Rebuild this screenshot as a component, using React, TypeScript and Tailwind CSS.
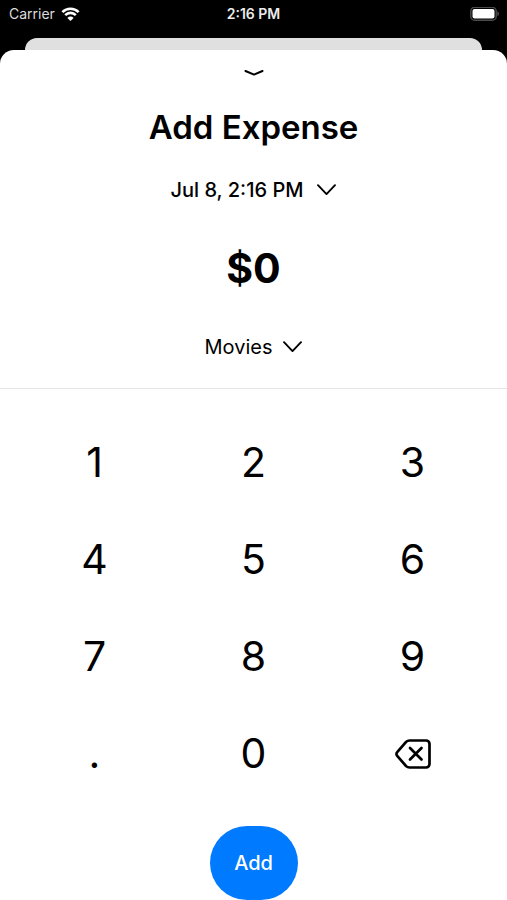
import { useState } from "react";

const KEYS = ["1", "2", "3", "4", "5", "6", "7", "8", "9", ".", "0"];

function StatusBar() {
  return (
    <header className="grid h-[38px] grid-cols-3 items-start px-2 pt-1 text-white">
      <div className="flex h-5 items-center gap-[6px] pl-px text-sm text-[#dcdcdc]">
        <span>Carrier</span>
        <svg width="19" height="14" viewBox="0 0 18 14" fill="none" stroke="#ffffff" strokeWidth="2.6" aria-label="Wi-Fi">
          <path d="M0.9 5.1a11.5 11.5 0 0 1 16.2 0" />
          <path d="M3.7 8.1a7.5 7.5 0 0 1 10.6 0" />
          <path d="M9 14 5.9 10.9a4.4 4.4 0 0 1 6.2 0Z" fill="#ffffff" stroke="none" />
        </svg>
      </div>
      <div className="flex h-5 items-center justify-center text-sm font-semibold text-[#ececec]">2:16 PM</div>
      <div className="flex h-5 items-center justify-end">
        <svg width="29" height="14" viewBox="0 0 29 14" aria-label="Battery full">
          <rect x="0.8" y="0.3" width="25.4" height="12.9" rx="3.8" fill="none" stroke="#4c4c4c" strokeWidth="1.4" />
          <rect x="2.500" y="2" width="22" height="9.500" rx="2" fill="#ffffff" />
          <path d="M27.300 4.3c1.100.4 1.700 1.300 1.700 2.400s-.6 2-1.700 2.400Z" fill="#4c4c4c" />
        </svg>
      </div>
    </header>
  );
}

function Chevron() {
  return (
    <svg className="pointer-events-none" width="19" height="12" viewBox="0 0 19 12" fill="none" stroke="#000000" strokeWidth="1.9" strokeLinecap="round" strokeLinejoin="round" aria-hidden="true">
      <path d="m1 1.2 8.500 8.900L18 1.2" />
    </svg>
  );
}

export default function App() {
  const [digits, setDigits] = useState("");
  const [category, setCategory] = useState("Movies");

  const press = (key: string) => {
    if (key === "." && digits.includes(".")) return;
    setDigits(digits === "" && key === "0" ? "" : digits + key);
  };

  return (
    <div className="min-h-screen bg-black font-['Inter',sans-serif] text-black">
      <StatusBar />
      <div className="mx-[25px] h-3 rounded-t-xl bg-[#e0e0e0]" />
      <main className="flex flex-col rounded-t-[14px] bg-white">
        <button aria-label="Close" className="flex h-[46px] items-center justify-center">
          <svg width="20" height="6" viewBox="0 0 20 6" fill="none" stroke="#000000" strokeWidth="2" strokeLinecap="round" strokeLinejoin="round" aria-hidden="true">
            <path d="m1.5 1 8.500 3.600L18.500 1" />
          </svg>
        </button>
        <h1 className="pt-[10px] text-center text-[33px] leading-[42px] font-semibold">Add Expense</h1>
        <div className="flex justify-center pt-7">
          <button className="flex h-7 items-center gap-[14px] text-[20px] font-medium">
            Jul 8, 2:16 PM
            <Chevron />
          </button>
        </div>
        <output aria-label="Amount" className="pt-[39px] text-center text-[41px] leading-[50px] font-bold">
          ${digits || "0"}
        </output>
        <div className="flex justify-center border-b border-[#e6e6e6] pt-[39px] pb-7">
          <label className="grid h-7 grid-cols-1 items-center justify-items-end text-[20px]">
            <select
              aria-label="Category"
              value={category}
              onChange={(e) => setCategory(e.target.value)}
              className="col-start-1 row-start-1 field-sizing-content appearance-none bg-transparent pr-[30px]"
            >
              <option>Movies</option>
              <option>Food</option>
              <option>Travel</option>
            </select>
            <span className="pointer-events-none col-start-1 row-start-1">
              <Chevron />
            </span>
          </label>
        </div>
        <div className="grid grid-cols-3 px-[15px] pt-[25px]">
          {KEYS.map((key) => (
            <button key={key} onClick={() => press(key)} className="h-[97px] text-[41px]">
              {key}
            </button>
          ))}
          <button aria-label="Delete" onClick={() => setDigits(digits.slice(0, -1))} className="flex h-[97px] items-center justify-center">
            <svg width="36" height="30" viewBox="0 0 36 30" fill="none" stroke="#000000" strokeWidth="2.7" strokeLinecap="round" strokeLinejoin="round" aria-hidden="true">
              <path d="M14.500 1.5h16.500a3.500 3.500 0 0 1 3.500 3.500v20a3.500 3.500 0 0 1-3.500 3.500H14.500a5 5 0 0 1-3.400-1.400L2.200 16.800a2.500 2.500 0 0 1 0-3.600l8.900-10.300a5 5 0 0 1 3.400-1.400Z" />
              <path d="m15 9 11.500 11.500M26.500 9 15 20.500" />
            </svg>
          </button>
        </div>
        <div className="flex justify-center pt-6">
          <button className="h-[74px] w-[88px] rounded-full bg-[#007aff] text-[20px] font-medium text-white">Add</button>
        </div>
      </main>
    </div>
  );
}
